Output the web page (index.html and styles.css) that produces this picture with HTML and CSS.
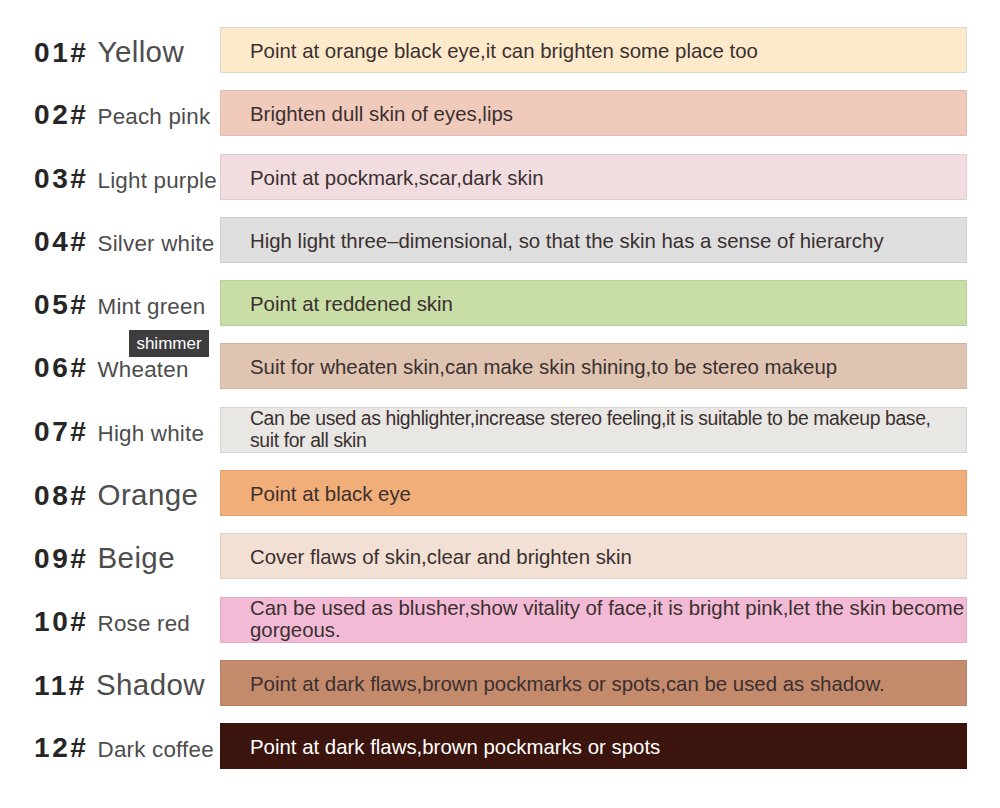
FILE: index.html
```html
<!DOCTYPE html>
<html>
<head>
<meta charset="utf-8">
<link rel="stylesheet" href="styles.css">
</head>
<body>
<div class="list">
  <div class="row">
    <div class="label"><span class="code">01#</span><span class="name big">Yellow</span></div>
    <div class="bar c1"><span class="desc">Point at orange black eye,it can brighten some place too</span></div>
  </div>
  <div class="row">
    <div class="label"><span class="code">02#</span><span class="name">Peach pink</span></div>
    <div class="bar c2"><span class="desc">Brighten dull skin of eyes,lips</span></div>
  </div>
  <div class="row">
    <div class="label"><span class="code">03#</span><span class="name">Light purple</span></div>
    <div class="bar c3"><span class="desc">Point at pockmark,scar,dark skin</span></div>
  </div>
  <div class="row">
    <div class="label"><span class="code">04#</span><span class="name">Silver white</span></div>
    <div class="bar c4"><span class="desc">High light three–dimensional, so that the skin has a sense of hierarchy</span></div>
  </div>
  <div class="row">
    <div class="label"><span class="code">05#</span><span class="name">Mint green</span></div>
    <div class="bar c5"><span class="desc">Point at reddened skin</span></div>
  </div>
  <div class="row">
    <div class="label"><span class="badge">shimmer</span><span class="code">06#</span><span class="name">Wheaten</span></div>
    <div class="bar c6"><span class="desc">Suit for wheaten skin,can make skin shining,to be stereo makeup</span></div>
  </div>
  <div class="row">
    <div class="label"><span class="code">07#</span><span class="name">High white</span></div>
    <div class="bar c7"><span class="desc two tight">Can be used as highlighter,increase stereo feeling,it is suitable to be makeup base,<br>suit for all skin</span></div>
  </div>
  <div class="row">
    <div class="label"><span class="code">08#</span><span class="name big">Orange</span></div>
    <div class="bar c8"><span class="desc">Point at black eye</span></div>
  </div>
  <div class="row">
    <div class="label"><span class="code">09#</span><span class="name big">Beige</span></div>
    <div class="bar c9"><span class="desc">Cover flaws of skin,clear and brighten skin</span></div>
  </div>
  <div class="row">
    <div class="label"><span class="code">10#</span><span class="name">Rose red</span></div>
    <div class="bar c10"><span class="desc two wide">Can be used as blusher,show vitality of face,it is bright pink,let the skin become<br>gorgeous.</span></div>
  </div>
  <div class="row">
    <div class="label"><span class="code">11#</span><span class="name big">Shadow</span></div>
    <div class="bar c11"><span class="desc">Point at dark flaws,brown pockmarks or spots,can be used as shadow.</span></div>
  </div>
  <div class="row">
    <div class="label"><span class="code">12#</span><span class="name">Dark coffee</span></div>
    <div class="bar c12"><span class="desc">Point at dark flaws,brown pockmarks or spots</span></div>
  </div>
</div>
</body>
</html>
```
FILE: styles.css
```css
html, body {
  margin: 0;
  padding: 0;
  background: #ffffff;
}
body {
  font-family: "Liberation Sans", Arial, sans-serif;
  width: 1000px;
  height: 808px;
  overflow: hidden;
}
.list {
  display: flex;
  flex-direction: column;
  gap: 17.3px;
  padding-top: 27px;
}
.row {
  display: flex;
  align-items: stretch;
  height: 46px;
}
.label {
  position: relative;
  width: 220px;
  flex: 0 0 220px;
  display: flex;
  align-items: baseline;
  padding-left: 34px;
  box-sizing: border-box;
  white-space: nowrap;
  align-self: center;
  margin-top: 4px;
}
.code {
  font-size: 28px;
  font-weight: bold;
  color: #262626;
  letter-spacing: 2.6px;
  margin-right: 9px;
}
.name {
  font-size: 22.4px;
  color: #4d4d4d;
  letter-spacing: 0.2px;
}
.name.big {
  font-size: 29.5px;
  letter-spacing: 0.4px;
}
.badge {
  position: absolute;
  left: 129px;
  top: -22px;
  width: 80px;
  height: 27px;
  background: #3d3d3d;
  color: #ffffff;
  font-size: 17px;
  line-height: 27px;
  text-align: center;
}
.bar {
  width: 747px;
  flex: 0 0 747px;
  box-sizing: border-box;
  border: 1px solid rgba(0, 0, 0, 0.07);
  display: flex;
  align-items: center;
  padding-left: 29px;
  overflow: hidden;
  color: #3b3030;
}
.desc {
  font-size: 20.4px;
  white-space: nowrap;
  margin-top: 3px;
}
.desc.two {
  font-size: 19.4px;
  line-height: 22.5px;
  margin-top: -1px;
}
.desc.tight {
  letter-spacing: -0.38px;
}
.desc.wide {
  font-size: 20.4px;
}
.c1 { background: #fdeacb; border-color: #dcd9cf; }
.c2 { background: #f0cbbb; }
.c3 { background: #f1dde0; }
.c4 { background: #dedede; }
.c5 { background: #c8dea6; }
.c6 { background: #dfc4b1; }
.c7 { background: #e9e7e4; }
.c8 { background: #f2ae78; }
.c9 { background: #f1e0d3; }
.c10 { background: #f3bad6; }
.c11 { background: #c48a6c; }
.c12 { background: #3b150d; color: #ffffff; }
```
